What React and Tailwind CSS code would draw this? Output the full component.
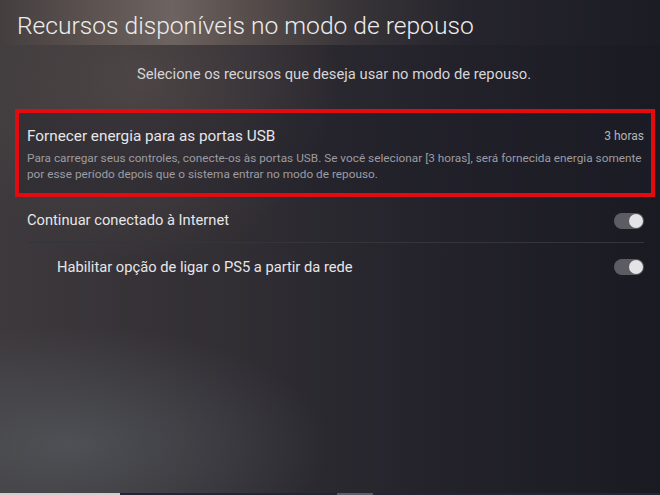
import React from "react";

const Toggle = () => (
  <div className="flex h-[16px] w-[30px] items-center justify-end rounded-full bg-[#5c5c62] pr-[1px]">
    <div className="h-[14px] w-[14px] rounded-full bg-[#e4e4e6]" />
  </div>
);

const App = () => {
  return (
    <div className="relative flex h-[495px] w-[660px] flex-col overflow-hidden bg-[#23222a] font-['Roboto','Open_Sans',sans-serif]">
      {/* background glow */}
      <div className="pointer-events-none absolute inset-0 bg-[linear-gradient(90deg,#3d393c_0%,#312e34_35%,#24232b_65%,#1a1a23_100%)]" />
      <div className="pointer-events-none absolute inset-0 bg-[radial-gradient(ellipse_260px_120px_at_70px_445px,rgba(95,102,108,0.55),transparent)]" />
      <div className="pointer-events-none absolute inset-0 bg-[radial-gradient(ellipse_200px_180px_at_140px_80px,rgba(120,104,96,0.35),transparent)]" />

      <div className="relative flex h-[45px] shrink-0 items-end bg-[linear-gradient(90deg,#443e3f_0%,#5c5350_14%,#6d6360_26%,#564d4b_38%,#3a3639_52%,#26252d_70%,#1c1c25_100%)] px-[17px] pb-[4px]">
        <h1 className="text-[24.6px] font-light leading-[30px] text-[#ededed]">
          Recursos disponíveis no modo de repouso
        </h1>
      </div>

      <div className="relative flex h-[58px] shrink-0 items-center justify-center pl-[8px]">
        <p className="text-[14.75px] leading-[18px] text-[#d6d6d8]">
          Selecione os recursos que deseja usar no modo de repouso.
        </p>
      </div>

      <div className="relative ml-[15px] mr-[5px] mt-[6px] h-[88px] shrink-0 border-4 border-[#e30b0f] bg-[#1f1f27]/40 pl-[8px] pr-[7px] pt-[13px]">
        <div className="flex h-[20px] items-center justify-between">
          <span className="text-[15.3px] text-[#e6e6e8]">Fornecer energia para as portas USB</span>
          <span className="text-[12px] text-[#b4b4b8]">3 horas</span>
        </div>
        <p className="mt-[4px] whitespace-nowrap text-[11.8px] leading-[16px] text-[#9c9ca2]">
          Para carregar seus controles, conecte-os às portas USB. Se você selecionar [3 horas], será fornecida energia somente
          <br />
          por esse período depois que o sistema entrar no modo de repouso.
        </p>
      </div>

      <div className="relative ml-[27px] mr-[16px] flex h-[46px] shrink-0 items-center justify-between border-b border-[#34343b] pt-[2px]">
        <span className="text-[14.7px] text-[#e6e6e8]">Continuar conectado à Internet</span>
        <Toggle />
      </div>

      <div className="relative ml-[57px] mr-[16px] flex h-[48px] shrink-0 items-center justify-between">
        <span className="text-[14.7px] text-[#e6e6e8]">Habilitar opção de ligar o PS5 a partir da rede</span>
        <Toggle />
      </div>

      <div className="flex-1" />

      <div className="relative flex h-[2px] shrink-0">
        <div className="w-[120px] bg-[#cfcfd0]" />
        <div className="w-[217px] bg-[#232436]" />
        <div className="w-[36px] bg-[#5a5b68]" />
        <div className="flex-1 bg-[#232436]" />
      </div>
    </div>
  );
};

export default App;
